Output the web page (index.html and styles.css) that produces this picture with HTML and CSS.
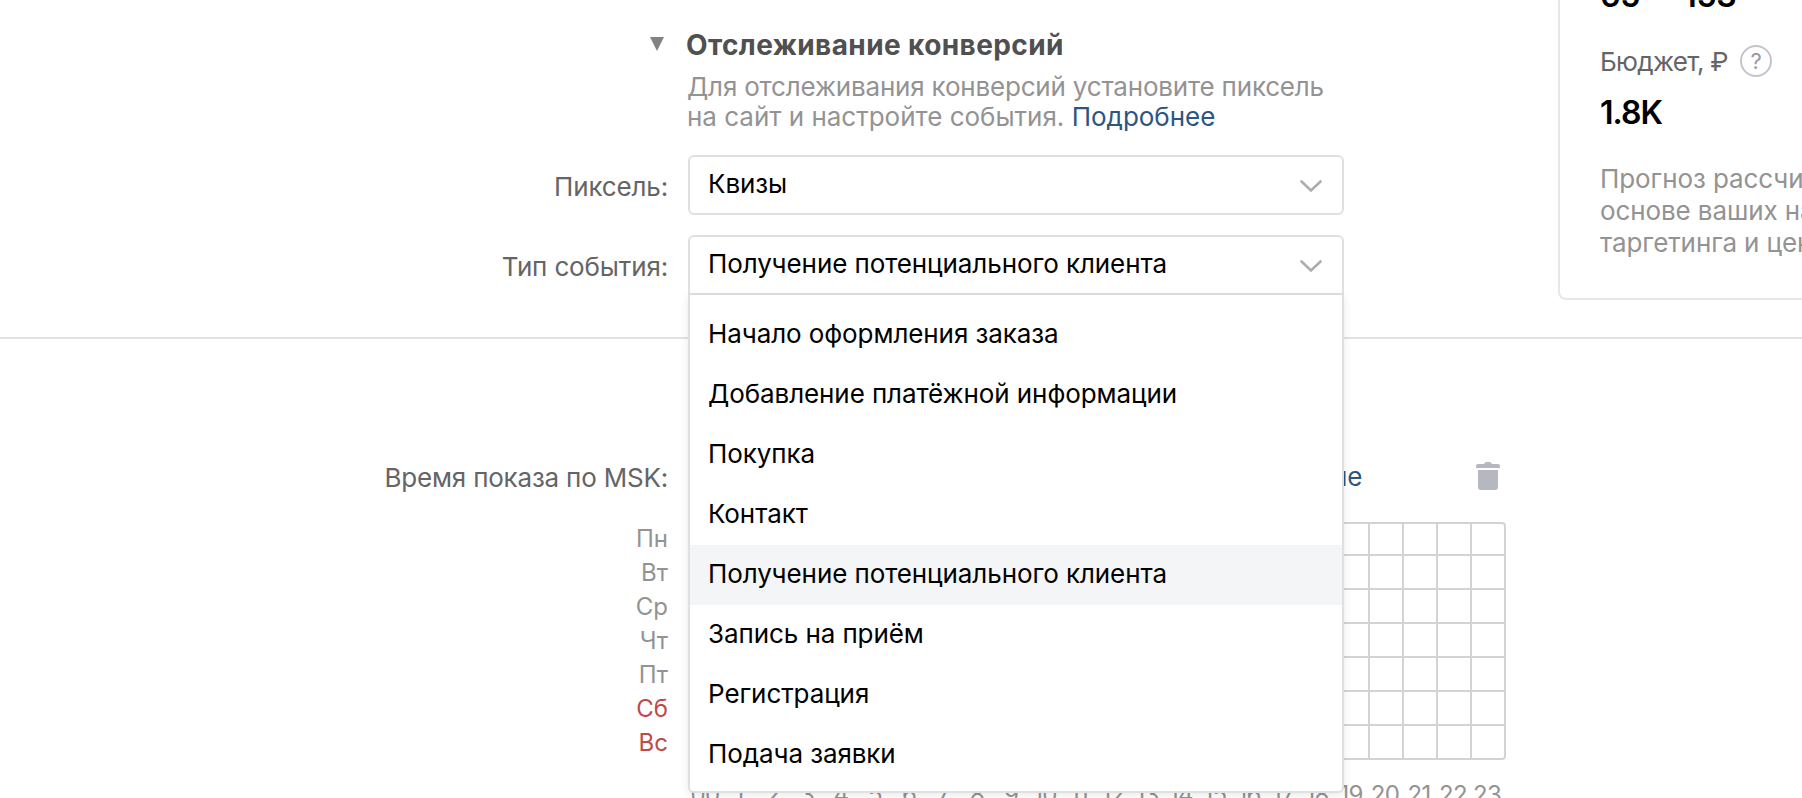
FILE: index.html
```
<!DOCTYPE html>
<html lang="ru">
<head>
<meta charset="utf-8">
<title>Отслеживание конверсий</title>
<link rel="stylesheet" href="styles.css">
</head>
<body>
<section class="settings">
  <div class="form">
    <div class="row heading-row">
      <div class="marker"><svg width="14" height="14" viewBox="0 0 14 14"><path d="M0 0H14L7 14Z" fill="#828282"/></svg></div>
      <h2 class="heading"><span>Отслеживание конверсий</span></h2>
    </div>
    <div class="row about-row">
      <div></div>
      <p class="about"><span class="about-first">Для отслеживания конверсий установите пиксель</span><br><span class="about-second">на сайт и настройте события. <a class="link">Подробнее</a></span></p>
    </div>
    <div class="row pixel-row">
      <div class="label">Пиксель:</div>
      <div class="select"><span>Квизы</span><svg class="chevron" width="22" height="13" viewBox="0 0 22 13"><path d="M1.5 1.5L11 10.5L20.5 1.5" fill="none" stroke="#adadad" stroke-width="2.6" stroke-linecap="round"/></svg></div>
    </div>
    <div class="row event-row">
      <div class="label event-label">Тип события:</div>
      <div class="select select-open"><span>Получение потенциального клиента</span><svg class="chevron" width="22" height="13" viewBox="0 0 22 13"><path d="M1.5 1.5L11 10.5L20.5 1.5" fill="none" stroke="#adadad" stroke-width="2.6" stroke-linecap="round"/></svg>
        <ul class="menu">
          <li>Начало оформления заказа</li>
          <li>Добавление платёжной информации</li>
          <li>Покупка</li>
          <li>Контакт</li>
          <li class="active">Получение потенциального клиента</li>
          <li>Запись на приём</li>
          <li>Регистрация</li>
          <li>Подача заявки</li>
        </ul>
      </div>
    </div>
  </div>
  <aside class="forecast">
    <div class="figure reach">65 — 153</div>
    <div class="budget"><span class="budget-text">Бюджет, ₽</span><span class="help">?</span></div>
    <div class="figure">1.8K</div>
    <p class="note">Прогноз рассчи<br>основе ваших на<br>таргетинга и цен</p>
  </aside>
</section>
<section class="schedule">
  <div class="row time-row">
    <div class="label time-label">Время показа по MSK:</div>
    <div class="tools">
      <a class="link">ие</a>
      <svg width="24" height="28" viewBox="0 0 24 28"><path d="M0 6V4Q0 2 2 2H8Q9 0 10.500 0H13.500Q15 0 16 2H22Q24 2 24 4V6ZM2 8H22V25Q22 28 19 28H5Q2 28 2 25Z" fill="#b5b7c1"/></svg>
    </div>
  </div>
  <div class="row">
    <div class="days"><span>Пн</span><span>Вт</span><span>Ср</span><span>Чт</span><span>Пт</span><span class="weekend">Сб</span><span class="weekend">Вс</span></div>
    <div>
      <div class="cells"></div>
      <div class="hours"><span>00</span><span>1</span><span>2</span><span>3</span><span>4</span><span>5</span><span>6</span><span>7</span><span>8</span><span>9</span><span>10</span><span>11</span><span>12</span><span>13</span><span>14</span><span>15</span><span>16</span><span>17</span><span>18</span><span>19</span><span>20</span><span>21</span><span>22</span><span>23</span></div>
    </div>
  </div>
</section>
</body>
</html>
```
FILE: styles.css
```
* { box-sizing: border-box; }
html, body { margin: 0; height: 798px; overflow: hidden; }
body { background: #fff; font: 26px/32px Inter, "Liberation Sans", sans-serif; color: #000; white-space: nowrap; }
p, h2, ul { margin: 0; padding: 0; }
.settings { display: flex; height: 339px; border-bottom: 2px solid #dfe1e4; }
.form { flex: none; width: 1558px; padding-top: 25px; }
.row { display: grid; grid-template-columns: 668px 820px; column-gap: 20px; }
.marker { justify-self: end; padding: 12px 4px 0 0; line-height: 0; }
.heading { color: #505050; font-size: 28px; line-height: 40px; font-weight: 700; margin-left: -2px; letter-spacing: 0.4px; }
.about-row { margin-top: 7px; }
.about { color: #939393; line-height: 30px; letter-spacing: -0.19px; margin-left: -1px; }
.about-second { letter-spacing: -0.01px; }
.link { color: #2d5583; }
.pixel-row { margin-top: 23px; }
.event-row { margin-top: 20px; }
.label { text-align: right; color: #656565; line-height: 64px; height: 60px; letter-spacing: -0.15px; }
.select { position: relative; display: flex; justify-content: space-between; width: 656px; height: 60px; padding: 0 20px 0 18px; border: 2px solid #dee0e2; border-radius: 6px; line-height: 54px; background: #fff; letter-spacing: -0.09px; }
.chevron { margin-top: 23px; }
.select-open { border-radius: 6px 6px 0 0; }
.menu { position: absolute; z-index: 2; top: 58px; left: -2px; width: 656px; height: 498px; padding: 10px 0 0; list-style: none; background: #fff; border: 2px solid #dee0e2; border-top: 0; border-radius: 0 0 6px 6px; box-shadow: 0 2px 8px rgba(0, 0, 0, .09); }
.menu li { height: 60px; padding-left: 18px; line-height: 57px; }
.menu .active { background: #f3f5f7; }
.forecast { flex: none; width: 244px; height: 300px; padding-left: 40px; border: 2px solid #e7e7e9; border-width: 0 0 2px 2px; border-radius: 0 0 0 8px; }
.figure { font-size: 32px; line-height: 40px; font-weight: 600; letter-spacing: -1px; }
.reach { margin-top: -24px; letter-spacing: -0.3px; word-spacing: -2px; }
.budget { display: flex; align-items: center; gap: 12px; height: 32px; margin-top: 29px; color: #656565; letter-spacing: -0.7px; }
.budget-text { padding-top: 2px; }
.help { width: 32px; height: 32px; border: 2px solid #c4c4cd; border-radius: 50%; text-align: center; font-size: 22px; line-height: 29px; color: #9698a5; }
.budget + .figure { margin-top: 16px; }
.note { margin-top: 30px; color: #939393; letter-spacing: -0.1px; overflow: hidden; }
.schedule { padding-top: 107px; }
.time-row { height: 76px; }
.time-label { letter-spacing: -0.2px; }
.tools { display: flex; justify-content: space-between; width: 812px; padding-left: 644px; line-height: 61px; }
.tools svg { margin-top: 16px; }
.days { display: grid; grid-auto-rows: 34px; text-align: right; font-size: 24px; line-height: 34px; color: #939393; }
.weekend { color: #bd4b47; }
.cells { width: 818px; height: 238px; border: 2px solid #d2d3d5; border-radius: 4px; background: repeating-linear-gradient(90deg, transparent 0 32px, #d2d3d5 32px 34px), repeating-linear-gradient(transparent 0 32px, #d2d3d5 32px 34px) 0 -2px; }
.hours { display: grid; grid-template-columns: repeat(24, 34px); margin-top: 18px; text-align: center; font-size: 24px; line-height: 34px; letter-spacing: -0.7px; color: #939393; }
```
